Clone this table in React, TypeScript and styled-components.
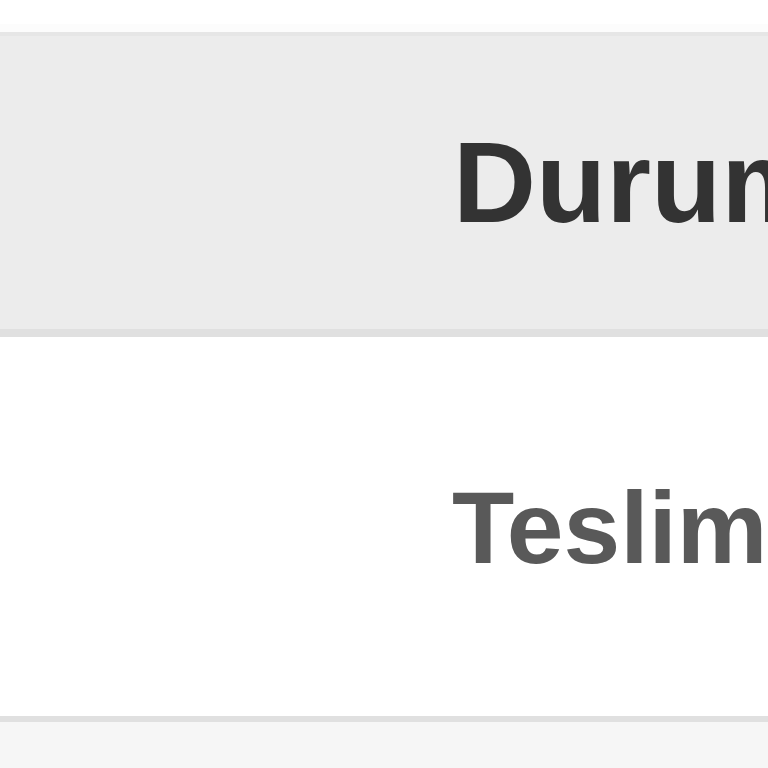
import React from "react";
import styled, { createGlobalStyle } from "styled-components";

const Global = createGlobalStyle`
  html, body { margin: 0; padding: 0; background: #ffffff; overflow: hidden; }
  #root { width: 768px; height: 768px; overflow: hidden; }
`;

const Page = styled.div`
  width: 768px;
  height: 768px;
  overflow: hidden;
  background: #f6f6f6;
  font-family: "Liberation Sans", Arial, Helvetica, sans-serif;
`;

const TopGap = styled.div`
  height: 24px;
  background: #ffffff;
  border-bottom: 8px solid #fcfcfc;
`;

const Table = styled.div`
  display: grid;
  grid-template-columns: 452px 1fr;
  width: 1400px;
`;

const Row = styled.div`
  display: contents;
`;

const Cell = styled.div<{ $head?: boolean }>`
  display: flex;
  align-items: center;
  box-sizing: border-box;
  white-space: nowrap;
  font-weight: 700;
  line-height: 1;
  background: ${(p) => (p.$head ? "#ececec" : "#ffffff")};
  color: ${(p) => (p.$head ? "#333333" : "#595959")};
  font-size: ${(p) => (p.$head ? "115px" : "102px")};
  height: ${(p) => (p.$head ? "305px" : "385px")};
  border-top: ${(p) => (p.$head ? "4px solid #e6e6e6" : "none")};
  border-bottom: ${(p) => (p.$head ? "8px solid #e0e0e0" : "6px solid #e0e0e0")};
  padding-top: ${(p) => (p.$head ? "0" : "3px")};
  padding-left: ${(p) => (p.$head ? "1px" : "0")};
`;

export default function App() {
  return (
    <Page>
      <Global />
      <TopGap />
      <Table>
        <Row>
          <Cell $head></Cell>
          <Cell $head>Durum</Cell>
        </Row>
        <Row>
          <Cell></Cell>
          <Cell>Teslim</Cell>
        </Row>
      </Table>
    </Page>
  );
}
